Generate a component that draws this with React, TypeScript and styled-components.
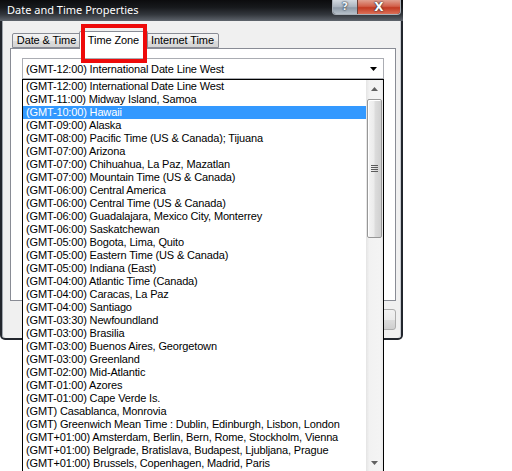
import React from "react";
import styled, { createGlobalStyle } from "styled-components";

const Global = createGlobalStyle`
  html, body { margin: 0; padding: 0; background: #ffffff; }
  body { width: 512px; height: 471px; overflow: hidden; font-family: "Liberation Sans", Arial, sans-serif; }
`;

const Page = styled.div`
  position: relative;
  width: 512px;
  height: 471px;
  background: #ffffff;
  overflow: hidden;
`;

const Window = styled.div`
  width: 403px;
  height: 340px;
  display: flex;
  flex-direction: column;
  background: #22262d;
  border-radius: 0 0 5px 5px;
  box-sizing: border-box;
`;

const TitleBar = styled.div`
  height: 21px;
  flex: none;
  display: flex;
  align-items: flex-start;
  justify-content: space-between;
  background: linear-gradient(to bottom, #0c0c0e 0%, #17191c 35%, #33373d 70%, #5f656d 100%);
`;

const TitleText = styled.div`
  font-family: "Noto Sans", "Liberation Sans", sans-serif;
  font-size: 11px;
  color: #ffffff;
  padding: 2px 0 0 7px;
  line-height: 16px;
`;

const CaptionGroup = styled.div`
  display: flex;
  margin-right: 2px;
  height: 14px;
  border: 1px solid #a9b0b8;
  border-top: none;
  border-radius: 0 0 4px 4px;
  overflow: hidden;
`;

const CaptionButton = styled.div<{ $close?: boolean }>`
  width: ${(p) => (p.$close ? 42 : 24)}px;
  height: 14px;
  display: flex;
  align-items: center;
  justify-content: center;
  font-family: "DejaVu Sans", sans-serif;
  font-weight: bold;
  font-size: ${(p) => (p.$close ? 12 : 11)}px;
  line-height: 14px;
  color: ${(p) => (p.$close ? "#ffffff" : "#eef2f6")};
  text-shadow: 0 0 2px #1e2a38, 0 0 1px #1e2a38;
  background: ${(p) =>
    p.$close
      ? "linear-gradient(to bottom, #e0a090 0%, #d2604a 45%, #c23a22 55%, #dc7058 100%)"
      : "linear-gradient(to bottom, #d3d9e0 0%, #a9b3be 50%, #8e9aa7 55%, #b6c0ca 100%)"};
  border-left: ${(p) => (p.$close ? "1px solid #6b4038" : "none")};
`;

const Body = styled.div`
  flex: 1;
  margin: 0 2px 2px 2px;
  background: #f0f0f0;
  box-shadow: inset 1px 0 0 #9ea4ab, inset -1px 0 0 #c6cad0;
  border-radius: 0 0 3px 3px;
  padding: 10px 0 0 8px;
  display: flex;
  flex-direction: column;
`;

const TabStrip = styled.div`
  display: flex;
  align-items: flex-end;
  height: 17px;
  padding-left: 2px;
  position: relative;
  z-index: 1;
`;

const Tab = styled.div<{ $w: number; $active?: boolean }>`
  box-sizing: border-box;
  width: ${(p) => p.$w + (p.$active ? 4 : 0)}px;
  height: ${(p) => (p.$active ? 18 : 15)}px;
  margin: 0 ${(p) => (p.$active ? -2 : 0)}px ${(p) => (p.$active ? -1 : 0)}px;
  border: 1px solid #898c95;
  border-bottom: ${(p) => (p.$active ? "none" : "1px solid #898c95")};
  border-radius: 2px 2px 0 0;
  background: ${(p) =>
    p.$active ? "#ffffff" : "linear-gradient(to bottom, #f3f3f3 0%, #ebebeb 50%, #dddddd 51%, #d4d4d4 100%)"};
  font-size: 11px;
  letter-spacing: -0.1px;
  color: #000;
  display: flex;
  justify-content: center;
  align-items: ${(p) => (p.$active ? "flex-start" : "center")};
  padding-top: ${(p) => (p.$active ? 2 : 0)}px;
  line-height: 13px;
  white-space: nowrap;
  position: relative;
  z-index: ${(p) => (p.$active ? 2 : 1)};
`;

const Panel = styled.div`
  box-sizing: border-box;
  width: 386px;
  height: 253px;
  border: 1px solid #898c95;
  background: #ffffff;
  padding: 9px 0 0 11px;
`;

const Combo = styled.div`
  box-sizing: border-box;
  width: 362px;
  height: 21px;
  border: 1px solid #abadb3;
  background: #ffffff;
  display: flex;
  align-items: center;
  justify-content: space-between;
  padding: 0 6px 0 3px;
  font-size: 11px;
  letter-spacing: -0.15px;
  color: #000;
`;

const ButtonRow = styled.div`
  display: flex;
  justify-content: flex-end;
  gap: 6px;
  width: 386px;
  margin-top: 8px;
`;

const DialogButton = styled.div`
  box-sizing: border-box;
  width: 75px;
  height: 21px;
  border: 1px solid #adadad;
  border-radius: 3px;
  background: linear-gradient(to bottom, #f2f2f2 0%, #ebebeb 50%, #dddddd 51%, #cfcfcf 100%);
  font-size: 11px;
  display: flex;
  align-items: center;
  justify-content: center;
`;

const Highlight = styled.div`
  position: absolute;
  left: 81px;
  top: 24px;
  width: 66px;
  height: 39px;
  box-sizing: border-box;
  border: 4px solid #ee0a0a;
  z-index: 5;
`;

const DropList = styled.div`
  position: absolute;
  left: 22px;
  top: 79px;
  width: 362px;
  height: 392px;
  box-sizing: border-box;
  border: 1px solid #000000;
  border-bottom: none;
  background: #ffffff;
  display: flex;
  z-index: 4;
`;

const Items = styled.div`
  flex: 1;
  display: flex;
  flex-direction: column;
`;

const Item = styled.div<{ $selected?: boolean }>`
  height: 13px;
  line-height: 13px;
  padding-left: 3px;
  font-size: 11px;
  letter-spacing: -0.15px;
  white-space: nowrap;
  overflow: hidden;
  color: ${(p) => (p.$selected ? "#ffffff" : "#000000")};
  background: ${(p) => (p.$selected ? "#3399ff" : "transparent")};
`;

const ScrollBar = styled.div`
  width: 17px;
  flex: none;
  display: flex;
  flex-direction: column;
  background: linear-gradient(to right, #e4e4e4 0%, #f2f2f2 20%, #f4f4f4 80%, #e8e8e8 100%);
`;

const ArrowButton = styled.div`
  height: 17px;
  flex: none;
  display: flex;
  align-items: center;
  justify-content: center;
`;

const Thumb = styled.div`
  box-sizing: border-box;
  margin: 2px 1px 0 1px;
  height: 139px;
  border: 1px solid #979797;
  border-radius: 2px;
  background: linear-gradient(to right, #f4f4f4 0%, #ececec 45%, #dcdcdc 55%, #d0d0d0 100%);
  box-shadow: inset 1px 1px 0 #ffffff;
  display: flex;
  align-items: center;
  justify-content: center;
`;

const Grip = styled.div`
  width: 7px;
  height: 8px;
  background: repeating-linear-gradient(to bottom, #5c5c5c 0px, #5c5c5c 1px, transparent 1px, transparent 2px);
`;

const Spacer = styled.div`
  flex: 1;
`;

const Tri = ({ up, color }: { up?: boolean; color: string }) => (
  <svg width="7" height="4" viewBox="0 0 7 4">
    <polygon points={up ? "3.5,0 7,4 0,4" : "0,0 7,0 3.5,4"} fill={color} />
  </svg>
);

const zones = [
  "(GMT-12:00) International Date Line West",
  "(GMT-11:00) Midway Island, Samoa",
  "(GMT-10:00) Hawaii",
  "(GMT-09:00) Alaska",
  "(GMT-08:00) Pacific Time (US & Canada); Tijuana",
  "(GMT-07:00) Arizona",
  "(GMT-07:00) Chihuahua, La Paz, Mazatlan",
  "(GMT-07:00) Mountain Time (US & Canada)",
  "(GMT-06:00) Central America",
  "(GMT-06:00) Central Time (US & Canada)",
  "(GMT-06:00) Guadalajara, Mexico City, Monterrey",
  "(GMT-06:00) Saskatchewan",
  "(GMT-05:00) Bogota, Lima, Quito",
  "(GMT-05:00) Eastern Time (US & Canada)",
  "(GMT-05:00) Indiana (East)",
  "(GMT-04:00) Atlantic Time (Canada)",
  "(GMT-04:00) Caracas, La Paz",
  "(GMT-04:00) Santiago",
  "(GMT-03:30) Newfoundland",
  "(GMT-03:00) Brasilia",
  "(GMT-03:00) Buenos Aires, Georgetown",
  "(GMT-03:00) Greenland",
  "(GMT-02:00) Mid-Atlantic",
  "(GMT-01:00) Azores",
  "(GMT-01:00) Cape Verde Is.",
  "(GMT) Casablanca, Monrovia",
  "(GMT) Greenwich Mean Time : Dublin, Edinburgh, Lisbon, London",
  "(GMT+01:00) Amsterdam, Berlin, Bern, Rome, Stockholm, Vienna",
  "(GMT+01:00) Belgrade, Bratislava, Budapest, Ljubljana, Prague",
  "(GMT+01:00) Brussels, Copenhagen, Madrid, Paris",
];

export default function App() {
  return (
    <Page>
      <Global />
      <Window>
        <TitleBar>
          <TitleText>Date and Time Properties</TitleText>
          <CaptionGroup>
            <CaptionButton>?</CaptionButton>
            <CaptionButton $close>X</CaptionButton>
          </CaptionGroup>
        </TitleBar>
        <Body>
          <TabStrip>
            <Tab $w={69}>Date &amp; Time</Tab>
            <Tab $w={65} $active>Time Zone</Tab>
            <Tab $w={73}>Internet Time</Tab>
          </TabStrip>
          <Panel>
            <Combo>
              <span>(GMT-12:00) International Date Line West</span>
              <Tri color="#000000" />
            </Combo>
          </Panel>
          <ButtonRow>
            <DialogButton>OK</DialogButton>
            <DialogButton>Cancel</DialogButton>
            <DialogButton>Apply</DialogButton>
          </ButtonRow>
        </Body>
      </Window>
      <Highlight />
      <DropList>
        <Items>
          {zones.map((z, i) => (
            <Item key={z} $selected={i === 2}>
              {z}
            </Item>
          ))}
        </Items>
        <ScrollBar>
          <ArrowButton>
            <Tri up color="#606060" />
          </ArrowButton>
          <Thumb>
            <Grip />
          </Thumb>
          <Spacer />
          <ArrowButton>
            <Tri color="#606060" />
          </ArrowButton>
        </ScrollBar>
      </DropList>
    </Page>
  );
}
